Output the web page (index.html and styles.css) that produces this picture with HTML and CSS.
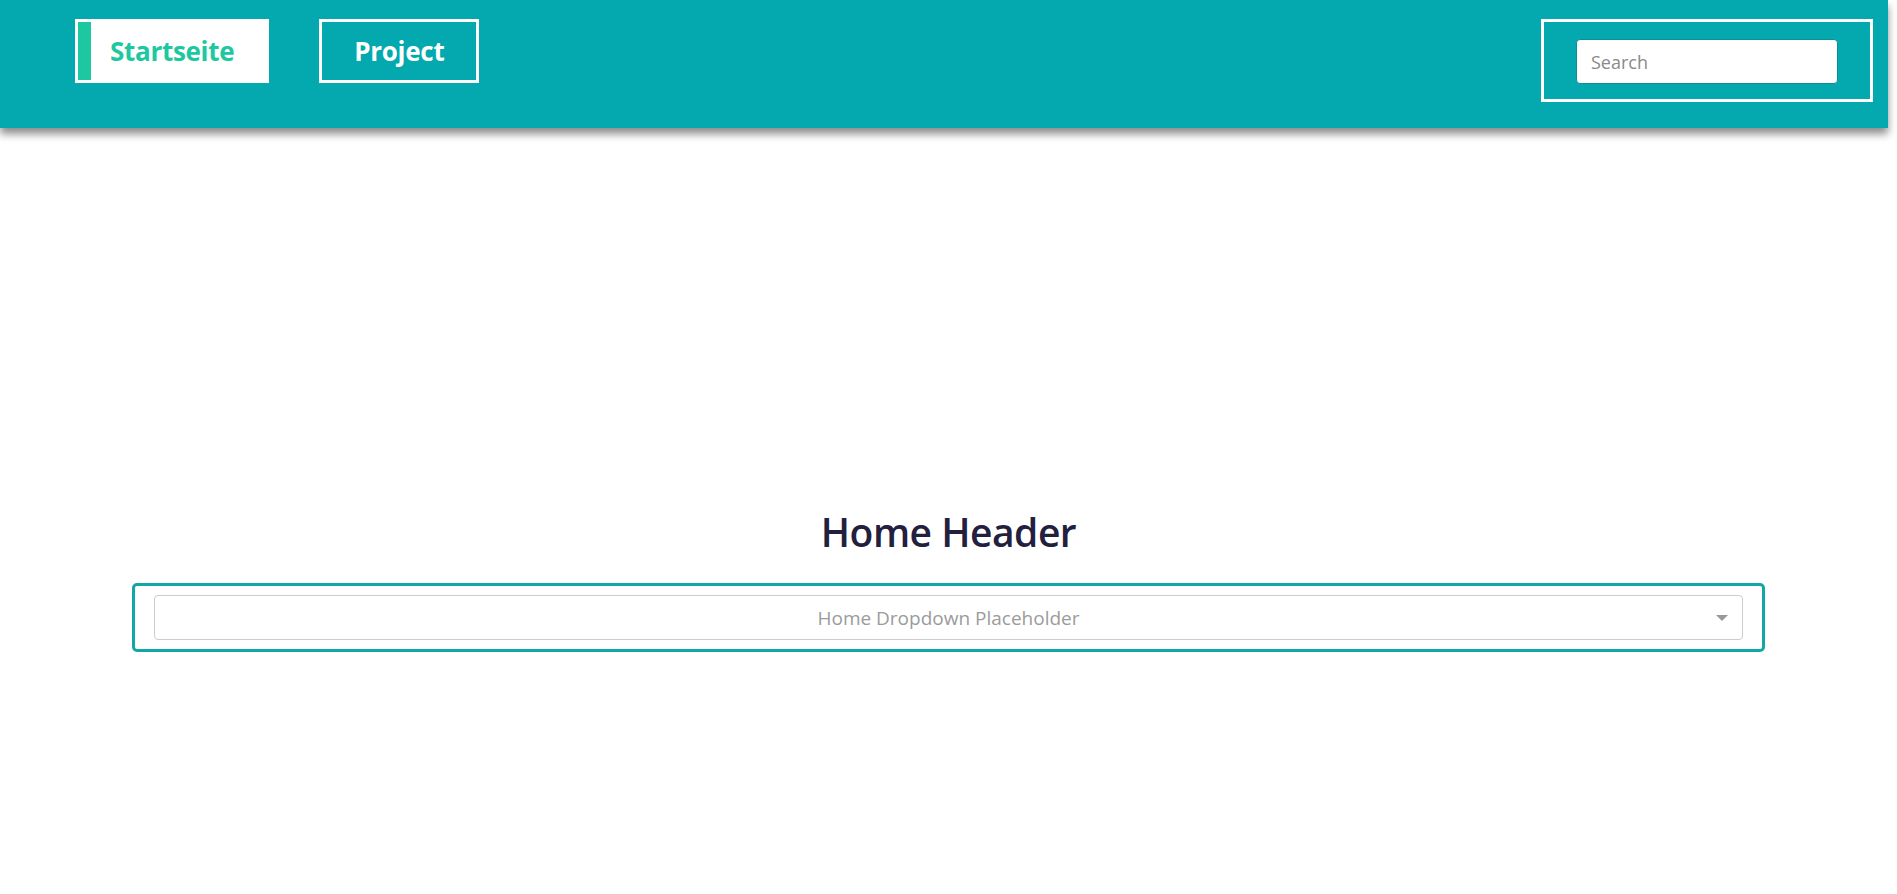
FILE: index.html
```html
<!DOCTYPE html>
<html lang="de">
<head>
<meta charset="utf-8">
<title>Home</title>
<link rel="stylesheet" href="styles.css">
</head>
<body>
<header class="topbar">
  <nav class="nav">
    <a class="nav-item nav-item--active" href="#">Startseite</a>
    <a class="nav-item" href="#">Project</a>
  </nav>
  <div class="search-box">
    <input class="search-input" type="text" placeholder="Search">
  </div>
</header>
<main class="main">
  <h1 class="home-title">Home Header</h1>
  <div class="dropdown-frame">
    <div class="dropdown">
      <span class="dropdown-placeholder">Home Dropdown Placeholder</span>
      <span class="dropdown-arrow"></span>
    </div>
  </div>
</main>
</body>
</html>
```

FILE: styles.css
```css
* { box-sizing: border-box; }

html, body {
  margin: 0;
  padding: 0;
  background: #ffffff;
  font-family: "Open Sans", "Noto Sans", sans-serif;
}

.topbar {
  width: calc(100% - 9px);
  height: 128px;
  background: #03a9ae;
  box-shadow: 0 6px 8px rgba(0, 0, 0, 0.45);
  display: flex;
  justify-content: space-between;
  align-items: flex-start;
  padding: 19px 15px 0 75px;
}

.nav {
  display: flex;
  gap: 50px;
}

.nav-item {
  display: block;
  height: 64px;
  border: 3px solid #ffffff;
  padding: 1px 32px 0;
  line-height: 57px;
  font-size: 26px;
  font-weight: 700;
  color: #ffffff;
  text-decoration: none;
  letter-spacing: -0.3px;
}

.nav-item--active {
  background: #ffffff;
  color: #1dc8a0;
  box-shadow: inset 13px 0 0 #1dc8a0;
}

.search-box {
  width: 332px;
  height: 83px;
  border: 3px solid #ffffff;
  padding: 17px 32px 0;
}

.search-input {
  display: block;
  width: 262px;
  height: 45px;
  border: 1px solid #0c8f93;
  border-radius: 4px;
  background: #ffffff;
  padding: 0 14px;
  font-family: "Open Sans", "Noto Sans", sans-serif;
  font-size: 18px;
  color: #333;
  outline: none;
}

.search-input::placeholder {
  color: #8a8a8a;
}

.main {
  width: 1633px;
  margin: 0 auto;
  padding-top: 379px;
}

.home-title {
  margin: 0 0 26px;
  text-align: center;
  font-size: 39px;
  line-height: 50px;
  font-weight: 600;
  letter-spacing: -0.5px;
  color: #22203e;
}

.dropdown-frame {
  border: 3px solid #12a6a8;
  border-radius: 5px;
  padding: 9px 19px;
}

.dropdown {
  position: relative;
  height: 45px;
  border: 1px solid #cccccc;
  border-radius: 4px;
  display: flex;
  align-items: center;
  justify-content: center;
}

.dropdown-placeholder {
  font-size: 19px;
  color: #9b9b9b;
}

.dropdown-arrow {
  position: absolute;
  right: 14px;
  top: 19px;
  width: 0;
  height: 0;
  border-left: 6px solid transparent;
  border-right: 6px solid transparent;
  border-top: 6px solid #999999;
}
```
